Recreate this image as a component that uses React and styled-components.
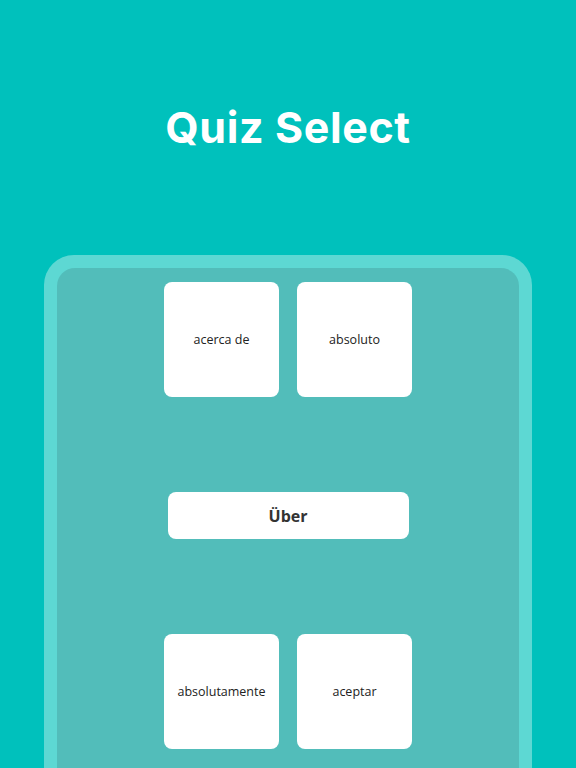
import styled, { createGlobalStyle } from "styled-components";

const GlobalStyle = createGlobalStyle`
    html, body {
        margin: 0;
        padding: 0;
        background-color: #00c1bc;
        overflow: hidden;
    }
`;

const topWords = ["acerca de", "absoluto"];
const bottomWords = ["absolutamente", "aceptar"];

function App() {
    return (
        <>
            <GlobalStyle />
            <Page>
                <Title>Quiz Select</Title>
                <Frame>
                    <Board>
                        <CardRow>
                            {topWords.map((word) => (
                                <Card key={word}>{word}</Card>
                            ))}
                        </CardRow>
                        <Prompt>Über</Prompt>
                        <CardRow>
                            {bottomWords.map((word) => (
                                <Card key={word}>{word}</Card>
                            ))}
                        </CardRow>
                    </Board>
                </Frame>
            </Page>
        </>
    );
}

const Page = styled.div`
    width: 576px;
    height: 768px;
    display: flex;
    flex-direction: column;
    align-items: center;
    overflow: hidden;
`;

const Title = styled.h1`
    margin: 100px 0 0;
    height: 55px;
    font-family: "Inter", sans-serif;
    font-weight: 700;
    font-size: 43px;
    line-height: 55px;
    color: #ffffff;
    letter-spacing: 0.6px;
`;

const Frame = styled.div`
    margin-top: 100px;
    width: 488px;
    padding: 13px;
    box-sizing: border-box;
    background-color: #5dd8d3;
    border-radius: 30px;
    flex-shrink: 0;
`;

const Board = styled.div`
    height: 560px;
    background-color: #52bdba;
    border-radius: 18px;
    padding-top: 14px;
    display: flex;
    flex-direction: column;
    align-items: center;
    gap: 95px;
`;

const CardRow = styled.div`
    display: flex;
    gap: 18px;
`;

const Card = styled.div`
    width: 115px;
    height: 115px;
    background-color: #ffffff;
    border-radius: 8px;
    display: flex;
    align-items: center;
    justify-content: center;
    font-family: "Open Sans", sans-serif;
    font-size: 12.5px;
    color: #222222;
`;

const Prompt = styled.div`
    width: 241px;
    height: 47px;
    background-color: #ffffff;
    border-radius: 8px;
    display: flex;
    align-items: center;
    justify-content: center;
    font-family: "Open Sans", sans-serif;
    font-weight: 700;
    font-size: 16px;
    color: #333333;
`;

export default App;
